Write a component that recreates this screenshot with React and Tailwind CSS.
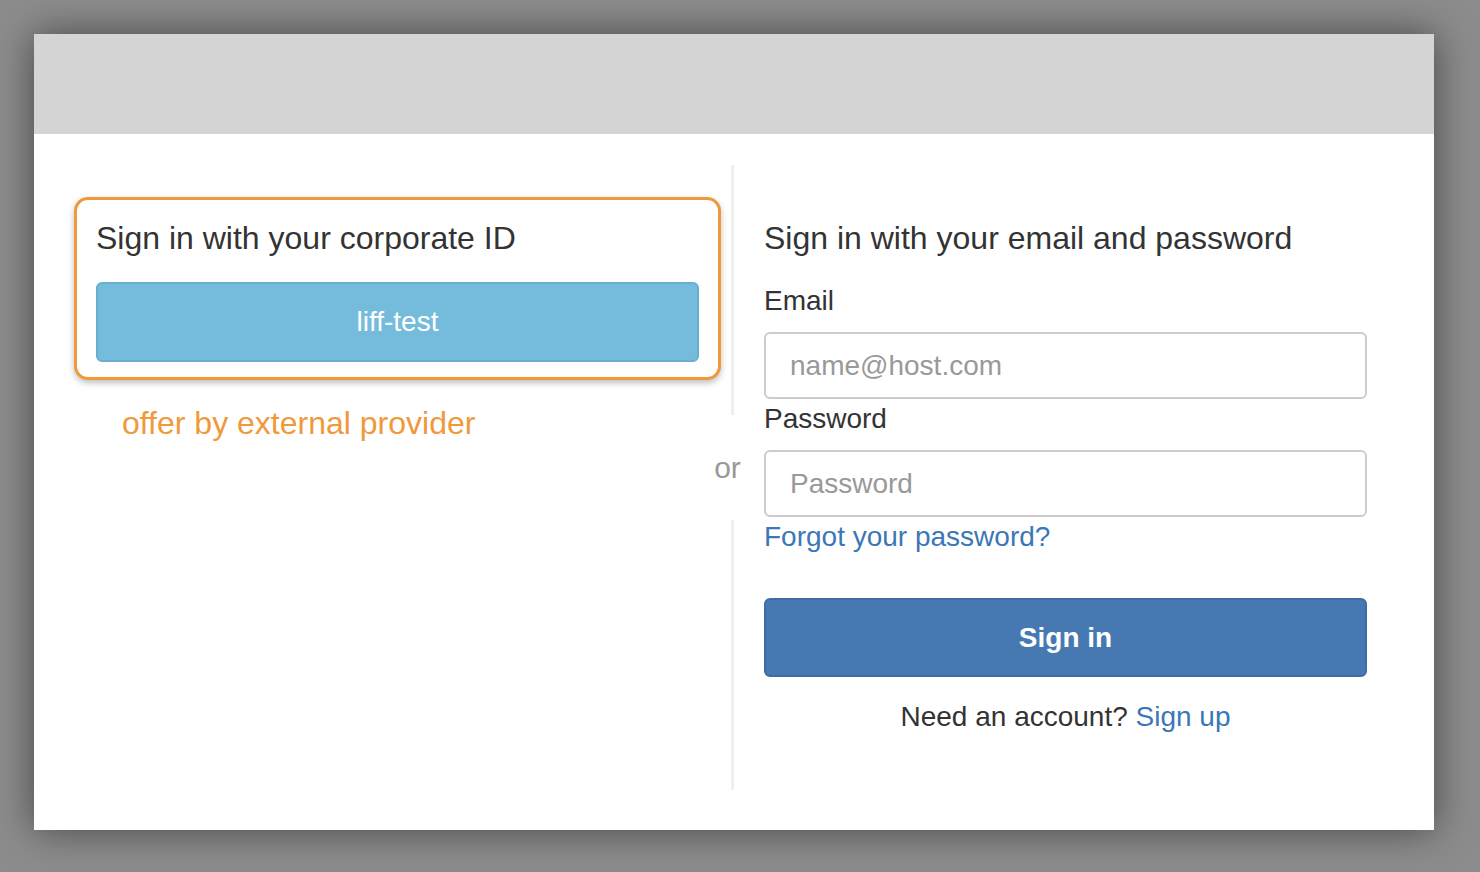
import React from "react";

const FONT = { fontFamily: '"Liberation Sans", Arial, Helvetica, sans-serif' };

function CorporateBox() {
  return (
    <div className="w-[647px] rounded-[14px] border-[3px] border-[#f0993b] bg-white px-[19px] pt-[20px] pb-[15px] shadow-[0_3px_6px_rgba(0,0,0,0.25)]">
      <h2 className="text-[32px] leading-[36px] text-[#333]">Sign in with your corporate ID</h2>
      <button className="mt-[26px] h-[80px] w-full rounded-[6px] border-2 border-[#66afd1] bg-[#75bcdc] text-[28px] text-white">
        liff-test
      </button>
    </div>
  );
}

function Field({ label, placeholder, type }) {
  return (
    <div>
      <label className="block text-[28px] leading-[32px] text-[#333]">{label}</label>
      <input
        type={type}
        placeholder={placeholder}
        className="mt-[15px] h-[67px] w-full rounded-[6px] border-2 border-[#cccccc] bg-white px-[24px] text-[28px] text-[#333] placeholder:text-[#999] outline-none"
      />
    </div>
  );
}

export default function App() {
  return (
    <div className="min-h-screen bg-[#8c8c8c] pt-[34px]" style={FONT}>
      <div className="mx-[34px] w-[1400px] bg-white shadow-[0_0_36px_rgba(0,0,0,0.5)]">
        <div className="h-[100px] bg-[#d4d4d4]" />
        <div className="flex pl-[40px] pt-[31px] pb-[40px]">
          <div className="pt-[32px]">
            <CorporateBox />
            <p className="mt-[25px] ml-[48px] text-[32px] leading-[36px] text-[#f0993b]">offer by external provider</p>
          </div>

          <div className="flex w-[21px] flex-col items-center">
            <div className="ml-[2px] h-[250px] w-[3px] bg-[#efefef]" />
            <div className="mr-[8px] flex h-[105px] items-center text-[30px] leading-none text-[#999]">or</div>
            <div className="ml-[2px] h-[270px] w-[3px] bg-[#efefef]" />
          </div>

          <div className="ml-[22px] w-[603px] pt-[55px]">
            <h2 className="text-[32px] leading-[36px] text-[#333]">Sign in with your email and password</h2>
            <div className="mt-[29px]">
              <Field label="Email" placeholder="name@host.com" type="email" />
            </div>
            <div className="mt-[4px]">
              <Field label="Password" placeholder="Password" type="password" />
            </div>
            <a href="#" className="mt-[4px] block text-[28px] leading-[32px] text-[#3b77b6]">
              Forgot your password?
            </a>
            <button className="mt-[45px] h-[79px] w-full rounded-[6px] border-2 border-[#3e6ca3] bg-[#4679b2] text-[28px] font-bold text-white">
              Sign in
            </button>
            <p className="mt-[24px] text-center text-[28px] leading-[32px] text-[#333]">
              Need an account? <a href="#" className="text-[#3b77b6]">Sign up</a>
            </p>
          </div>
        </div>
      </div>
    </div>
  );
}
